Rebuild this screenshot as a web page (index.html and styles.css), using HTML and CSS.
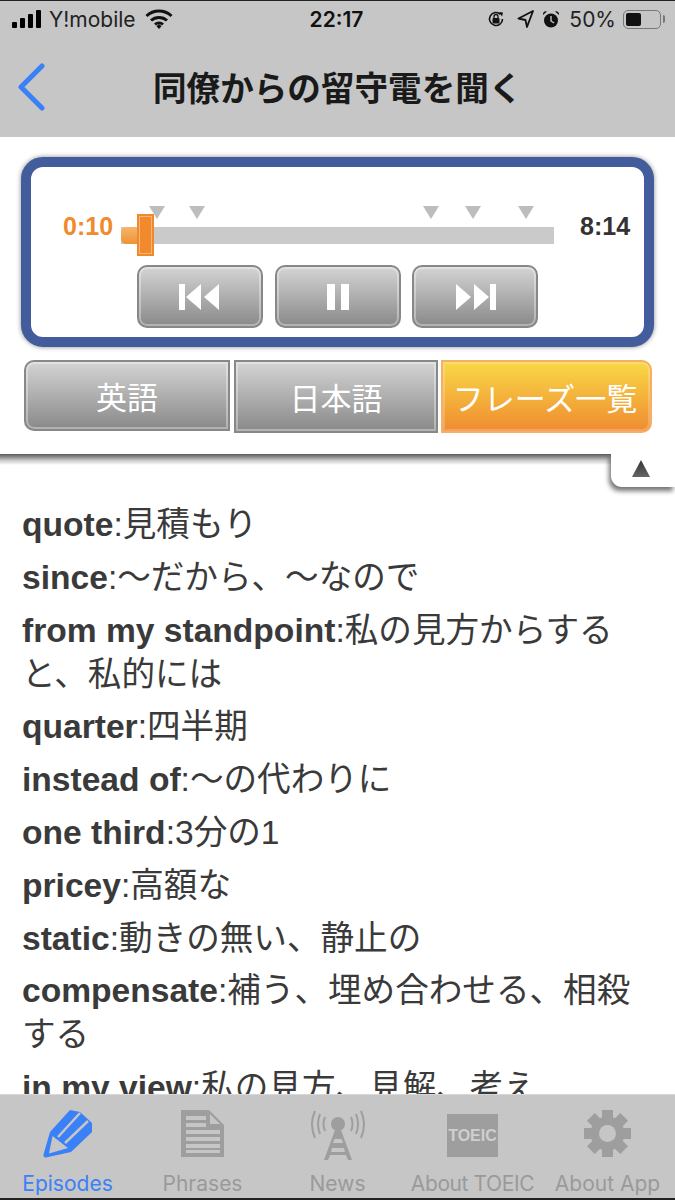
FILE: index.html
```html
<!DOCTYPE html>
<html lang="ja">
<head>
  <meta charset="UTF-8" />
  <meta name="viewport" content="width=device-width, initial-scale=1.0"/>
  <title>同僚からの留守電を聞く</title>
  <link rel="stylesheet" href="styles.css">
</head>
<body>
  <header class="top-bar">
    <div class="status-bar">
      <div class="status-left">
        <svg class="signal-icon" width="31" height="18" viewBox="0 0 31 18"><rect x="0" y="12" width="5" height="6" rx="1"/><rect x="8" y="8" width="5" height="10" rx="1"/><rect x="16" y="4" width="5" height="14" rx="1"/><rect x="24" y="0" width="5" height="18" rx="1"/></svg>
        <span class="carrier">Y!mobile</span>
        <svg class="wifi-icon" width="28" height="20" viewBox="0 0 28 20"><path d="M1.5 7a18 18 0 0 1 25 0M6 11.5a12 12 0 0 1 16 0M10 15.5a6 6 0 0 1 8 0" fill="none" stroke="#111" stroke-width="3"/><path d="M11.5 17.2 14 15l2.5 2.2L14 20z" fill="#111"/></svg>
      </div>
      <div class="status-time">22:17</div>
      <div class="status-right">
        <svg width="18" height="18" viewBox="0 0 18 18"><path d="M15.5 9a6.5 6.500 0 1 1-2-4.700" fill="none" stroke="#111" stroke-width="1.600"/><path d="M12 2l4 .5-1 4z" fill="#111"/><rect x="5.500" y="8" width="7" height="5.500" rx="1" fill="#111"/><path d="M7 8V6.500a2 2 0 0 1 4 0V8" fill="none" stroke="#111" stroke-width="1.300"/></svg>
        <svg class="location-icon" width="17" height="18" viewBox="0 0 17 18"><path d="M16 1 1.500 8.500l7 1.500 1.500 7z" fill="none" stroke="#111" stroke-width="1.800" stroke-linejoin="round"/></svg>
        <svg class="alarm-icon" width="18" height="19" viewBox="0 0 18 19"><circle cx="9" cy="10.500" r="7" fill="#111"/><path d="M9 6v5l3 2" fill="none" stroke="#c6c6c6" stroke-width="1.400"/><path d="M1 5a3 3 0 0 1 4-3.500zM17 5a3 3 0 0 0-4-3.500z" fill="#111"/></svg>
        <span class="battery-text">50%</span>
        <div class="battery"><div class="battery-level"></div></div>
      </div>
    </div>
    <div class="nav-bar">
      <svg class="back-icon" width="29" height="48" viewBox="0 0 29 48"><path d="M25 3 4 24l21 21" fill="none" stroke="#3a80f6" stroke-width="5" stroke-linecap="round" stroke-linejoin="round"/></svg>
      <h1>同僚からの留守電を聞く</h1>
    </div>
  </header>

  <section class="controls">
    <div class="player">
      <div class="slider-row">
        <span class="time-now">0:10</span>
        <div class="track">
          <div class="track-done"></div>
          <span class="marker" style="left: 28px"></span>
          <span class="marker" style="left: 68px"></span>
          <span class="marker" style="left: 302px"></span>
          <span class="marker" style="left: 344px"></span>
          <span class="marker" style="left: 397px"></span>
          <div class="thumb"></div>
        </div>
        <span class="time-total">8:14</span>
      </div>
      <div class="transport">
        <button class="gray-btn transport-btn"><svg width="42" height="26" viewBox="0 0 42 26"><path d="M0 0h6v26H0zM7 13 22 0v26zM25 13 40 0v26z"/></svg></button>
        <button class="gray-btn transport-btn"><svg width="22" height="26" viewBox="0 0 22 26"><path d="M0 0h8v26H0zM14 0h8v26h-8z"/></svg></button>
        <button class="gray-btn transport-btn"><svg width="42" height="26" viewBox="0 0 42 26"><path d="M2 0l15 13L2 26zM20 0l15 13-15 13zM36 0h6v26h-6z"/></svg></button>
      </div>
    </div>
    <div class="mode-tabs">
      <button class="gray-btn mode-tab tab-first">英語</button>
      <button class="gray-btn mode-tab tab-middle">日本語</button>
      <button class="mode-tab tab-active">フレーズ一覧</button>
    </div>
  </section>

  <main class="content">
    <div class="drawer-handle"><span class="drawer-arrow"></span></div>
    <ul class="phrase-list">
      <li><b>quote</b>:見積もり</li>
      <li><b>since</b>:〜だから、〜なので</li>
      <li><b>from my standpoint</b>:私の見方からすると、私的には</li>
      <li><b>quarter</b>:四半期</li>
      <li><b>instead of</b>:〜の代わりに</li>
      <li><b>one third</b>:3分の1</li>
      <li><b>pricey</b>:高額な</li>
      <li><b>static</b>:動きの無い、静止の</li>
      <li><b>compensate</b>:補う、埋め合わせる、相殺する</li>
      <li><b>in my view</b>:私の見方、見解、考え</li>
    </ul>
  </main>

  <nav class="tab-bar">
    <div class="tab-item active">
      <svg width="50" height="48" viewBox="0 0 50 48"><path d="M27 0 37 2 49 13v9L28 42 3 47.500Q0 47.500 .5 44.500L7 22z" fill="#3a80f6"/><path d="M9.500 26 25 38 6 43.500z" fill="#c6c6c6"/><path d="M15 27 37 3M22 33 45 11" stroke="#c6c6c6" stroke-width="2.500"/></svg>
      <span>Episodes</span>
    </div>
    <div class="tab-item">
      <svg width="44" height="47" viewBox="0 0 44 47"><path d="M0 0h28l15 15v32H0z" fill="#9e9e9e"/><path d="M5 6h20v4H5zM5 13h20v4H5zM5 20h34v4H5zM5 27h34v4H5zM5 34h34v4H5zM5 40h34v3H5zM29 4l10 10H29z" fill="#c6c6c6"/></svg>
      <span>Phrases</span>
    </div>
    <div class="tab-item">
      <svg width="54" height="50" viewBox="0 0 54 50"><g fill="none" stroke="#9e9e9e" stroke-width="2"><path d="M4 1q-6 13 0 27M9 4q-4 10 0 20M14 7q-3 7 0 14M50 1q6 13 0 27M45 4q4 10 0 20M40 7q3 7 0 14"/></g><circle cx="27" cy="14" r="7" fill="#9e9e9e"/><path d="M24 20h6l11 30h-4l-2-5H19l-2 5h-4zM23.500 29l-1.500 4h10l-1.500-4zM21 38l-1 4h14l-1-4z" fill="#9e9e9e" fill-rule="evenodd"/></svg>
      <span>News</span>
    </div>
    <div class="tab-item">
      <div class="toeic-icon">TOEIC</div>
      <span class="label-tight">About TOEIC</span>
    </div>
    <div class="tab-item">
      <svg width="47" height="47" viewBox="0 0 47 47"><g fill="#9e9e9e"><circle cx="23.500" cy="23.500" r="17"/><rect x="18" y="0" width="11" height="47"/><rect x="0" y="18" width="47" height="11"/><rect x="18" y="0" width="11" height="47" transform="rotate(45 23.500 23.500)"/><rect x="18" y="0" width="11" height="47" transform="rotate(-45 23.500 23.500)"/></g><circle cx="23.500" cy="23.500" r="8.500" fill="#c6c6c6"/></svg>
      <span>About App</span>
    </div>
  </nav>
</body>
</html>
```

FILE: styles.css
```css
* {
  box-sizing: border-box;
  font-family: "Liberation Sans", "Noto Sans CJK JP", sans-serif;
}

body {
  margin: 0;
  height: 1200px;
  display: flex;
  flex-direction: column;
  overflow: hidden;
  background-color: white;
}

.top-bar {
  height: 137px;
  background-color: #c6c6c6;
  border-top: 1px solid #222;
}

.status-bar {
  height: 35px;
  padding: 1px 14px 0 12px;
  display: grid;
  grid-template-columns: 1fr auto 1fr;
  align-items: center;
  color: #111;
}

.status-bar span,
.status-time {
  font-family: Inter, "Liberation Sans", sans-serif;
}

.status-left,
.status-right {
  display: flex;
  align-items: center;
}

.status-right {
  justify-content: flex-end;
}

.carrier {
  font-size: 21px;
  margin-left: 6px;
  color: #222;
}

.wifi-icon {
  margin-left: 9px;
}

.status-time {
  font-size: 21px;
  font-weight: 600;
}

.location-icon {
  margin-left: 12px;
}

.alarm-icon {
  margin-left: 8px;
}

.battery-text {
  font-size: 21px;
  margin-left: 9px;
  color: #222;
}

.battery {
  width: 38px;
  height: 19px;
  margin-left: 7px;
  padding: 2px;
  border: 1.5px solid #777;
  border-radius: 5px;
  position: relative;
}

.battery::after {
  content: "";
  position: absolute;
  top: 4px;
  right: -5px;
  width: 2px;
  height: 8px;
  background-color: #777;
  border-radius: 0 2px 2px 0;
}

.battery-level {
  width: 15px;
  height: 100%;
  background-color: #111;
  border-radius: 2px;
}

.nav-bar {
  height: 101px;
  padding-left: 17px;
  display: flex;
  align-items: center;
  position: relative;
}

.nav-bar h1 {
  margin: 0 0 0 107px;
  font-size: 33.6px;
  font-weight: bold;
  color: #1a1a1a;
  white-space: nowrap;
}

.controls {
  height: 317px;
  padding-top: 20px;
}

.player {
  width: 633px;
  height: 190px;
  margin-left: 21px;
  padding: 47px 0 0 32px;
  border: 10px solid #425c9c;
  border-radius: 22px;
  box-shadow: 0 0 5px rgba(0, 0, 0, 0.45);
  background-color: white;
}

.slider-row {
  height: 42px;
  display: flex;
  align-items: flex-start;
}

.time-now,
.time-total {
  font-size: 25px;
  line-height: 24px;
  font-weight: bold;
}

.time-now {
  width: 58px;
  color: #f08a2c;
}

.time-total {
  margin-left: 26px;
  color: #333;
}

.track {
  width: 433px;
  height: 17px;
  margin-top: 13px;
  background-color: #cacaca;
  position: relative;
}

.track-done {
  width: 20px;
  height: 100%;
  border-radius: 5px 0 0 5px;
  background: linear-gradient(#f6b56b, #ee9335);
}

.marker {
  position: absolute;
  top: -21px;
  border-left: 8px solid transparent;
  border-right: 8px solid transparent;
  border-top: 13px solid #bdbdbd;
}

.thumb {
  position: absolute;
  top: -13px;
  left: 16px;
  width: 17px;
  height: 42px;
  background-color: #f08a2c;
  border: 2px solid #ee8a2c;
  box-shadow: inset 0 0 0 1px #f9b678;
}

.gray-btn {
  background: linear-gradient(#d4d4d4, #898989);
  border: 2px solid #888;
  box-shadow: inset 0 0 0 2px rgba(255, 255, 255, 0.35);
  color: white;
  padding: 0;
}

.transport {
  margin: 9px 0 0 74px;
  display: flex;
  gap: 11.5px;
}

.transport-btn {
  width: 126px;
  height: 63px;
  border-radius: 10px;
  display: flex;
  align-items: center;
  justify-content: center;
}

.transport-btn svg {
  fill: white;
}

.mode-tabs {
  margin: 13px 0 0 24px;
  display: flex;
  align-items: flex-start;
}

.mode-tab {
  font-size: 31px;
}

.tab-first {
  width: 206px;
  height: 71px;
  border-radius: 10px 0 0 10px;
}

.tab-middle {
  width: 204px;
  height: 73px;
  margin-left: 4px;
}

.tab-active {
  width: 211px;
  height: 73px;
  margin-left: 3px;
  padding: 0 3px 0 0;
  border: 2px solid #f6ae6a;
  border-radius: 0 10px 10px 0;
  background: linear-gradient(#f9d846, #ef8c31);
  box-shadow: inset 0 0 0 2px rgba(255, 255, 255, 0.2);
  color: white;
}

.content {
  flex: 1;
  min-height: 0;
  overflow: hidden;
  position: relative;
  background: linear-gradient(#5c5c5c, #8c8c8c 3px, #c4c4c4 6px, #fff 11px) no-repeat top / 100% 11px;
}

.drawer-handle {
  position: absolute;
  top: 0;
  right: 0;
  width: 64px;
  height: 33px;
  padding: 6px 4px 0 0;
  background-color: white;
  border-bottom-left-radius: 11px;
  box-shadow: -2px 4px 5px rgba(0, 0, 0, 0.55);
  display: flex;
  justify-content: center;
}

.drawer-arrow {
  width: 18px;
  height: 17px;
  background: linear-gradient(#333, #666);
  clip-path: polygon(50% 0, 100% 100%, 0 100%);
}

.phrase-list {
  list-style: none;
  margin: 0;
  padding: 49px 35px 0 22px;
  font-size: 33.6px;
  line-height: 44px;
  color: #3a3a3a;
}

.phrase-list li {
  margin-bottom: 8.8px;
}

.tab-bar {
  height: 106px;
  flex-shrink: 0;
  background-color: #c6c6c6;
  border-top: 1px solid #d8d8d8;
  border-bottom: 2px solid #222;
  display: grid;
  grid-template-columns: repeat(5, 135px);
}

.tab-item {
  height: 103px;
  position: relative;
  display: flex;
  justify-content: center;
  padding-top: 15px;
  color: #9a9a9a;
  white-space: nowrap;
}

.tab-item svg,
.toeic-icon {
  flex-shrink: 0;
}

.tab-item span {
  position: absolute;
  top: 76px;
  font-family: Inter, "Liberation Sans", sans-serif;
  font-size: 21px;
  line-height: 26px;
}

.tab-item .label-tight {
  letter-spacing: -0.4px;
}

.tab-item.active {
  color: #3a80f6;
}

.toeic-icon {
  width: 51px;
  height: 43px;
  margin-top: 4px;
  background-color: #9e9e9e;
  color: #cfcfcf;
  font-size: 16px;
  font-weight: bold;
  text-align: center;
  line-height: 43px;
}
```
